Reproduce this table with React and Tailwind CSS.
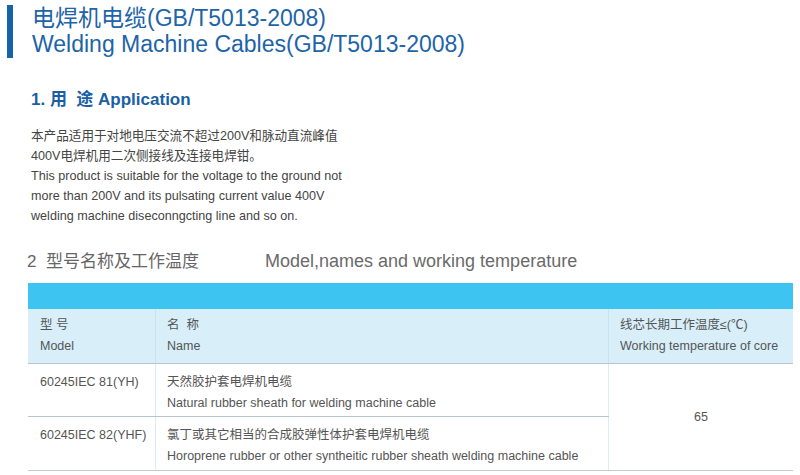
const ROWS = [
  {
    model: '60245IEC 81(YH)',
    cn: '天然胶护套电焊机电缆',
    en: 'Natural rubber sheath for welding machine cable',
  },
  {
    model: '60245IEC 82(YHF)',
    cn: '氯丁或其它相当的合成胶弹性体护套电焊机电缆',
    en: 'Horoprene rubber or other syntheitic rubber sheath welding machine cable',
  },
]

const font = { fontFamily: '"Liberation Sans", "Noto Sans CJK SC", sans-serif' }

export default function App() {
  return (
    <div className="h-[475px] w-[800px] overflow-hidden bg-white text-[#444]" style={font}>
      {/* title */}
      <div className="flex gap-[19px] pl-[7px] pt-[5px]">
        <div className="h-[53px] w-[6px] bg-[#1763a8]" />
        <div className="text-[23px] leading-[26px] text-[#1d64a8]">
          <div>电焊机电缆(GB/T5013-2008)</div>
          <div>Welding Machine Cables(GB/T5013-2008)</div>
        </div>
      </div>

      {/* application */}
      <div className="pl-[31px] pt-[31px]">
        <h2 className="text-[17px] font-bold leading-[21px] text-[#1a5fa3]">
          1. 用&nbsp; 途 Application
        </h2>
        <div className="mt-[16px] text-[12.6px] leading-[20px] text-[#444]">
          <div>本产品适用于对地电压交流不超过200V和脉动直流峰值</div>
          <div>400V电焊机用二次侧接线及连接电焊钳。</div>
          <div>This product is suitable for the voltage to the ground not</div>
          <div>more than 200V and its pulsating current value 400V</div>
          <div>welding machine diseconngcting line and so on.</div>
        </div>
      </div>

      {/* section 2 heading */}
      <div className="flex items-baseline pl-[27px] pt-[25px] leading-[20px] text-[#666]">
        <span className="w-[238px] text-[17px]">2&nbsp; 型号名称及工作温度</span>
        <span className="text-[18px] text-[#6a6a6a]">Model,names and working temperature</span>
      </div>

      {/* table */}
      <div className="ml-[28px] mt-[11px] w-[765px] text-[12.5px] text-[#555]">
        <div className="h-[26px] bg-[#3ec4f0]" />
        <div className="flex h-[55px] border-b border-[#b8c4cc] bg-[#d8effa]">
          <div className="w-[128px] border-r border-[#c8e4f2] pl-[12px] pt-[6px] leading-[21px]">
            <div>型 号</div>
            <div>Model</div>
          </div>
          <div className="w-[453px] border-r border-[#c8e4f2] pl-[11px] pt-[6px] leading-[21px]">
            <div>名&nbsp; 称</div>
            <div>Name</div>
          </div>
          <div className="flex-1 pl-[11px] pt-[6px] leading-[21px]">
            <div>线芯长期工作温度≤(℃)</div>
            <div>Working temperature of core</div>
          </div>
        </div>
        <div className="flex border-b border-[#c4ccd2]">
          <div className="w-[581px]">
            {ROWS.map((r, i) => (
              <div
                key={r.model}
                className={`flex h-[53px] ${i === 0 ? 'border-b border-[#b8c4cc]' : ''}`}
              >
                <div className="w-[128px] border-r border-[#dcecf5] pl-[12px] pt-[8px] leading-[21px]">
                  {r.model}
                </div>
                <div className="flex-1 border-r border-[#dcecf5] pl-[11px] pt-[8px] leading-[21px]">
                  <div>{r.cn}</div>
                  <div>{r.en}</div>
                </div>
              </div>
            ))}
          </div>
          <div className="flex flex-1 items-center justify-center">65</div>
        </div>
      </div>
    </div>
  )
}
